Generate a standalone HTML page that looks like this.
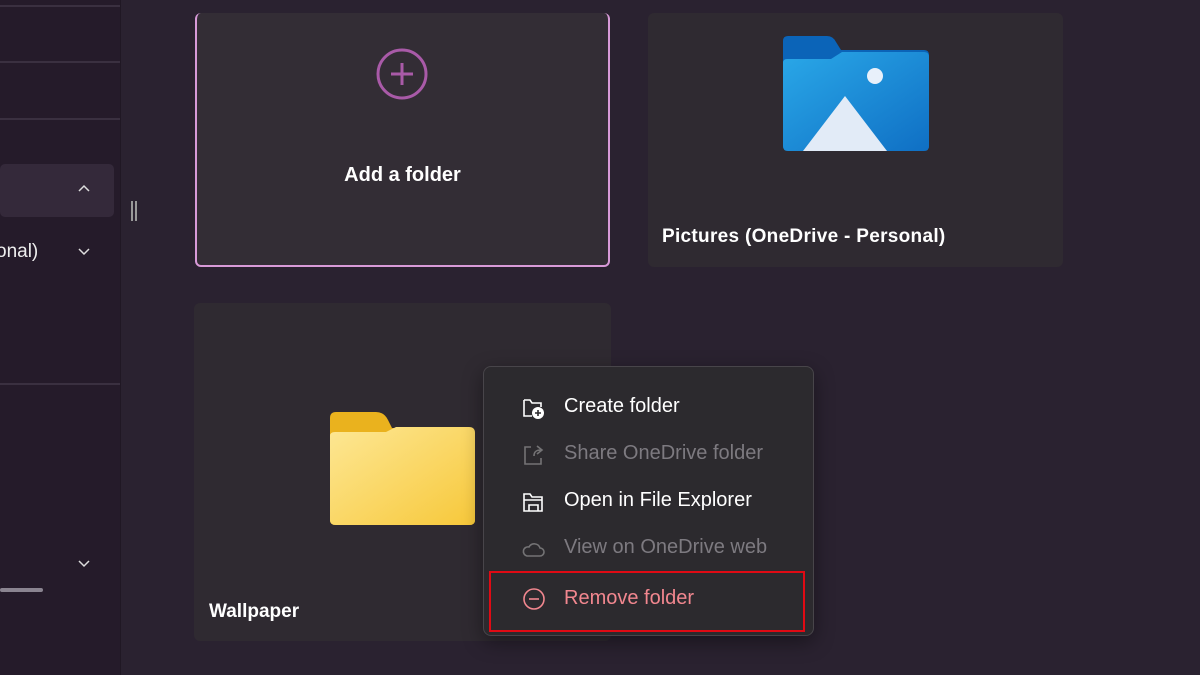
<!DOCTYPE html>
<html><head><meta charset="utf-8"><style>
*{margin:0;padding:0;box-sizing:border-box}
body{width:1200px;height:675px;overflow:hidden;background:#2a2230;font-family:"Segoe UI","Liberation Sans",sans-serif;position:relative;color:#fff}
.abs{position:absolute}
.side{left:0;top:0;width:121px;height:675px;background:#251b2a;border-right:1px solid #201824}
.line{left:0;width:120px;height:2px;background:#3a3040}
.card{background:#332d35;border-radius:6px}
.menu{left:483px;top:366px;width:331px;height:270px;background:#2c2a2e;border:1px solid #48454a;border-radius:8px;box-shadow:0 6px 20px rgba(0,0,0,.4)}
.mi{position:absolute;left:80px;font-size:20px;white-space:nowrap}
svg{position:absolute}
</style></head><body>
<div class="abs side"></div>
<div class="abs line" style="top:5px"></div>
<div class="abs line" style="top:61px"></div>
<div class="abs line" style="top:118px"></div>
<div class="abs line" style="top:383px"></div>
<div class="abs" style="left:0;top:164px;width:114px;height:53px;background:#34293a;border-radius:5px"></div>
<div class="abs" style="left:-4px;top:241px;font-size:19px;color:#eee">onal)</div>
<svg style="left:77px;top:184px" width="14" height="10"><path d="M2 7 L7 2 L12 7" stroke="#ddd" stroke-width="1.5" fill="none"/></svg>
<svg style="left:77px;top:246px" width="14" height="10"><path d="M2 3 L7 8 L12 3" stroke="#ddd" stroke-width="1.5" fill="none"/></svg>
<svg style="left:77px;top:558px" width="14" height="10"><path d="M2 3 L7 8 L12 3" stroke="#ddd" stroke-width="1.5" fill="none"/></svg>
<div class="abs" style="left:0;top:588px;width:43px;height:4px;background:#8a8490;border-radius:2px"></div>
<div class="abs" style="left:131px;top:201px;width:6px;height:20px;border-left:2px solid #999;border-right:2px solid #999"></div>

<div class="abs card" style="left:195px;top:13px;width:415px;height:254px;border:2px solid #d89ad8;border-top:none"></div>
<svg style="left:375px;top:47px" width="54" height="54"><circle cx="27" cy="27" r="24" stroke="#a95aa8" stroke-width="3" fill="none"/><path d="M27 16V38M16 27H38" stroke="#a95aa8" stroke-width="3"/></svg>
<div class="abs" style="left:195px;top:164px;width:415px;text-align:center;font-size:20px;font-weight:600">Add a folder</div>

<div class="abs card" style="left:648px;top:13px;width:415px;height:254px;background:#2f2a31"></div>
<svg style="left:781px;top:34px" width="150" height="120"><defs><linearGradient id="b" x1="0" y1="0" x2="1" y2="1"><stop offset="0" stop-color="#2aa8e8"/><stop offset="1" stop-color="#0f6fc4"/></linearGradient><linearGradient id="y" x1="0" y1="0" x2="1" y2="1"><stop offset="0" stop-color="#fde68e"/><stop offset="1" stop-color="#f8c93c"/></linearGradient></defs><path d="M2 7Q2 2 7 2H46Q52 2 55 8L60 16H143Q148 16 148 21V112Q148 116 144 116H6Q2 116 2 112Z" fill="#0b64b8"/><path d="M2 29Q2 25 6 25H50L61 18H143Q148 18 148 23V112Q148 117 143 117H7Q2 117 2 112Z" fill="url(#b)"/><circle cx="94" cy="42" r="8" fill="#e8f0fa"/><path d="M22 117L64 62L106 117Z" fill="#e2ebf7"/></svg>
<div class="abs" style="left:662px;top:226px;font-size:19px;font-weight:600;letter-spacing:.3px">Pictures (OneDrive - Personal)</div>

<div class="abs card" style="left:194px;top:303px;width:417px;height:338px;background:#2f2a31"></div>
<svg style="left:328px;top:410px" width="150" height="118"><defs><linearGradient id="y2" x1="0" y1="0" x2="1" y2="1"><stop offset="0" stop-color="#fde794"/><stop offset="1" stop-color="#f7c83a"/></linearGradient></defs><path d="M2 8Q2 2 8 2H48Q56 2 60 10L64 18H140Q147 18 147 24V110Q147 115 141 115H8Q2 115 2 110Z" fill="#eab21e"/><path d="M2 26Q2 22 7 22H58L68 17H141Q147 17 147 23V110Q147 115 141 115H8Q2 115 2 110Z" fill="url(#y2)"/></svg>
<div class="abs" style="left:209px;top:601px;font-size:19px;font-weight:600">Wallpaper</div>

<div class="abs menu">
<svg style="left:37px;top:29px" width="26" height="26"><path d="M3 4H9L11 7H20V11M3 4V20H11" stroke="#fff" stroke-width="1.6" fill="none"/><circle cx="17" cy="17" r="6" fill="#fff"/><path d="M17 14V20M14 17H20" stroke="#2c2a2e" stroke-width="1.6"/></svg>
<div class="mi" style="top:28px;color:#fff">Create folder</div>
<svg style="left:37px;top:76px" width="26" height="26" opacity=".45"><path d="M10 4H4V21H20V15M13 13C13 8 16 7 20 7M16 3L21 7L16 11" stroke="#ccc" stroke-width="1.6" fill="none"/></svg>
<div class="mi" style="top:75px;color:#7d7a80">Share OneDrive folder</div>
<svg style="left:37px;top:123px" width="26" height="26"><path d="M3 4H9L11 7H21V21H3Z M3 10H21 M8 15H17V21H8Z" stroke="#fff" stroke-width="1.6" fill="none"/></svg>
<div class="mi" style="top:122px;color:#fff">Open in File Explorer</div>
<svg style="left:37px;top:170px" width="26" height="26" opacity=".45"><path d="M6 19H19A4 4 0 0 0 19 11A6 6 0 0 0 8 10A4.5 4.5 0 0 0 6 19Z" stroke="#ccc" stroke-width="1.6" fill="none"/></svg>
<div class="mi" style="top:169px;color:#7d7a80">View on OneDrive web</div>
<div style="position:absolute;left:5px;top:204px;width:316px;height:61px;border:2px solid #e00a14"></div>
<svg style="left:37px;top:219px" width="26" height="26"><circle cx="13" cy="13" r="10" stroke="#f2878f" stroke-width="1.6" fill="none"/><path d="M8 13H18" stroke="#f2878f" stroke-width="1.6"/></svg>
<div class="mi" style="top:220px;color:#f2878f">Remove folder</div>
</div>
</body></html>
